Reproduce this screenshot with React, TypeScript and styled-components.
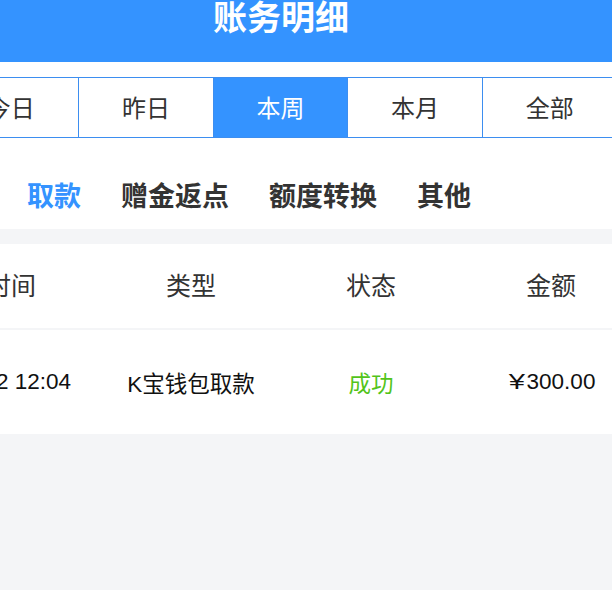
import React from "react";
import styled, { createGlobalStyle } from "styled-components";

const Global = createGlobalStyle`
  html, body { margin: 0; padding: 0; background: #f4f5f7; overflow: hidden; }
  body { font-family: "Liberation Sans", "Noto Sans CJK SC", sans-serif; }
`;

const Page = styled.div`
  width: 750px;
  margin-left: -94px;
  min-height: 590px;
  background: #f4f5f7;
`;

const Header = styled.header`
  height: 62px;
  background: #3493ff;
  display: flex;
  justify-content: center;
  align-items: flex-start;
`;

const Title = styled.h1`
  margin: 0;
  font-size: 34px;
  line-height: 37px;
  font-weight: 700;
  color: #fff;
`;

const TabsWrap = styled.div`
  background: #fff;
  padding: 15px 38.5px 0 36.5px;
`;

const Tabs = styled.div`
  display: grid;
  grid-template-columns: repeat(5, 1fr);
  border: 1px solid #3d8ef0;
  height: 61px;
  box-sizing: border-box;
`;

const Tab = styled.div<{ $active?: boolean; $first?: boolean }>`
  display: flex;
  align-items: center;
  justify-content: center;
  padding-bottom: 3px;
  font-size: 24px;
  color: ${(p) => (p.$active ? "#fff" : "#333")};
  background: ${(p) => (p.$active ? "#3493ff" : "#fff")};
  border-left: ${(p) => (p.$first ? "none" : "1.5px solid #3d8ef0")};
`;

const Cats = styled.div`
  background: #fff;
  display: flex;
  gap: 40px;
  padding: 45px 26px 17px 27px;
`;

const Cat = styled.div<{ $active?: boolean }>`
  font-size: 27px;
  line-height: 29px;
  font-weight: 700;
  color: ${(p) => (p.$active ? "#3493ff" : "#333")};
`;

const Table = styled.div`
  margin-top: 15px;
  background: #fff;
  padding: 0 15px;
`;

const Row = styled.div<{ $head?: boolean }>`
  display: grid;
  grid-template-columns: repeat(4, 1fr);
  align-items: center;
  box-sizing: border-box;
  height: ${(p) => (p.$head ? "86px" : "104px")};
  padding-bottom: ${(p) => (p.$head ? "4px" : "0")};
  border-bottom: ${(p) => (p.$head ? "2px solid #f4f5f7" : "none")};
`;

const Cell = styled.div<{ $head?: boolean; $color?: string }>`
  text-align: center;
  white-space: nowrap;
  font-size: ${(p) => (p.$head ? "25px" : "22.5px")};
  color: ${(p) => p.$color ?? (p.$head ? "#333" : "#111")};
`;

const Yen = styled.span`
  display: inline-block;
  width: 20px;
  text-align: center;
  transform: scaleX(1.3);
`;

const tabs = ["今日", "昨日", "本周", "本月", "全部"];
const cats = ["存款", "取款", "赠金返点", "额度转换", "其他"];

export default function App() {
  return (
    <>
      <Global />
      <Page>
        <Header>
          <Title>账务明细</Title>
        </Header>
        <TabsWrap>
          <Tabs>
            {tabs.map((t, i) => (
              <Tab key={t} $active={t === "本周"} $first={i === 0}>
                {t}
              </Tab>
            ))}
          </Tabs>
        </TabsWrap>
        <Cats>
          {cats.map((c) => (
            <Cat key={c} $active={c === "取款"}>
              {c}
            </Cat>
          ))}
        </Cats>
        <Table>
          <Row $head>
            <Cell $head>时间</Cell>
            <Cell $head>类型</Cell>
            <Cell $head>状态</Cell>
            <Cell $head>金额</Cell>
          </Row>
          <Row>
            <Cell>05-12 12:04</Cell>
            <Cell>K宝钱包取款</Cell>
            <Cell $color="#52c41a">成功</Cell>
            <Cell>
              <Yen>¥</Yen>300.00
            </Cell>
          </Row>
        </Table>
      </Page>
    </>
  );
}
